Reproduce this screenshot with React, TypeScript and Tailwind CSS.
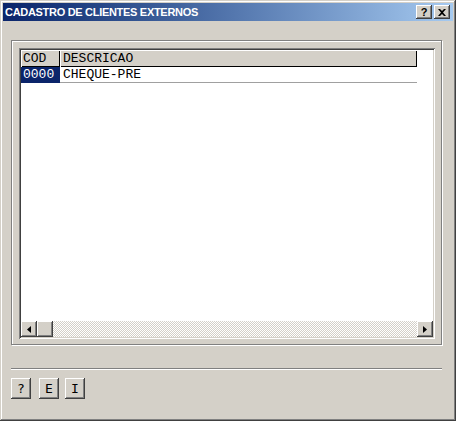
import { useState } from 'react';

const raised =
  'shadow-[inset_-1px_-1px_0_#404040,inset_1px_1px_0_#ffffff,inset_-2px_-2px_0_#808080,inset_2px_2px_0_#d4d0c8]';

const rows = [{ cod: '0000', descricao: 'CHEQUE-PRE' }];

const TitleButton = ({ children }: { children: React.ReactNode }) => (
  <button
    className={`w-[16px] h-[14px] bg-[#d4d0c8] flex items-center justify-center text-black ${raised}`}
  >
    {children}
  </button>
);

const ToolButton = ({ label }: { label: string }) => (
  <button
    className={`w-[20px] h-[21px] bg-[#d4d0c8] flex items-center justify-center text-black text-[13px] font-normal font-['DejaVu_Sans_Mono',monospace] ${raised}`}
  >
    {label}
  </button>
);

const App = () => {
  const [selected] = useState(0);

  return (
    <div className="w-[456px] h-[421px] bg-[#d4d0c8] p-[3px] flex flex-col shadow-[inset_-1px_-1px_0_#404040,inset_1px_1px_0_#d4d0c8,inset_-2px_-2px_0_#808080,inset_2px_2px_0_#ffffff] font-['Liberation_Sans',Arial,sans-serif]">
      {/* Title bar */}
      <div className="h-[18px] flex items-center justify-between pl-[2px] pr-[3px] bg-gradient-to-r from-[#0a246a] to-[#a6caf0]">
        <span className="text-white font-bold text-[11px] tracking-[-0.3px]">CADASTRO DE CLIENTES EXTERNOS</span>
        <div className="flex gap-[2px]">
          <TitleButton>
            <span className="text-[11px] font-bold leading-none">?</span>
          </TitleButton>
          <TitleButton>
            <svg width="8" height="7" viewBox="0 0 8 7">
              <path d="M0 0h2l2 2 2-2h2L5 3.5 8 7H6L4 5 2 7H0l3-3.5z" fill="#000" />
            </svg>
          </TitleButton>
        </div>
      </div>

      <div className="flex-1 px-[8px] flex flex-col">
        {/* Group box */}
        <div className="mt-[19px] h-[305px] w-[431px] border border-[#808080] shadow-[inset_1px_1px_0_#ffffff,1px_1px_0_#ffffff] pt-[7px] pl-[7px] pr-[6px] pb-[5px]">
          {/* Grid */}
          <div className="h-full bg-white p-[2px] flex flex-col shadow-[inset_1px_1px_0_#808080,inset_-1px_-1px_0_#ffffff,inset_2px_2px_0_#404040,inset_-2px_-2px_0_#d4d0c8] font-['Liberation_Mono','Courier_New',monospace] text-[13px]">
            <div className="flex-1 flex flex-col">
              <div className="flex h-[17px]">
                <div className="w-[39px] bg-[#d4d0c8] pl-[2px] leading-[17px] shadow-[inset_1px_1px_0_#ffffff,inset_-1px_-1px_0_#000000]">
                  COD
                </div>
                <div className="w-[357px] bg-[#d4d0c8] pl-[3px] leading-[17px] shadow-[inset_1px_1px_0_#ffffff,inset_-1px_-1px_0_#000000]">
                  DESCRICAO
                </div>
              </div>
              {rows.map((r, i) => (
                <div key={r.cod} className="flex h-[16px]">
                  <div
                    className={`w-[39px] pl-[2px] leading-[16px] ${
                      i === selected ? 'bg-[#0a246a] text-white' : 'text-black'
                    }`}
                  >
                    {r.cod}
                  </div>
                  <div className="w-[357px] pl-[3px] leading-[15px] text-black border-b border-[#a0a0a0]">
                    {r.descricao}
                  </div>
                </div>
              ))}
            </div>
            {/* Horizontal scrollbar */}
            <div className="h-[16px] flex">
              <div className={`w-[16px] h-[16px] bg-[#d4d0c8] flex items-center justify-center ${raised}`}>
                <svg width="4" height="7" viewBox="0 0 4 7">
                  <path d="M4 0v7L0 3.5z" fill="#000" />
                </svg>
              </div>
              <div className={`w-[16px] h-[16px] bg-[#d4d0c8] ${raised}`} />
              <div className="flex-1 bg-[image:repeating-conic-gradient(#d4d0c8_0%_25%,#ffffff_0%_50%)] bg-[length:2px_2px]" />
              <div className={`w-[16px] h-[16px] bg-[#d4d0c8] flex items-center justify-center ${raised}`}>
                <svg width="4" height="7" viewBox="0 0 4 7">
                  <path d="M0 0v7l4-3.5z" fill="#000" />
                </svg>
              </div>
            </div>
          </div>
        </div>

        {/* Separator */}
        <div className="mt-[23px] w-[431px] h-[2px] border-t border-[#808080] border-b border-b-white" />

        {/* Bottom buttons */}
        <div className="mt-[8px] flex">
          <ToolButton label="?" />
          <div className="ml-[8px]">
            <ToolButton label="E" />
          </div>
          <div className="ml-[6px]">
            <ToolButton label="I" />
          </div>
        </div>
      </div>
    </div>
  );
};

export default App;
